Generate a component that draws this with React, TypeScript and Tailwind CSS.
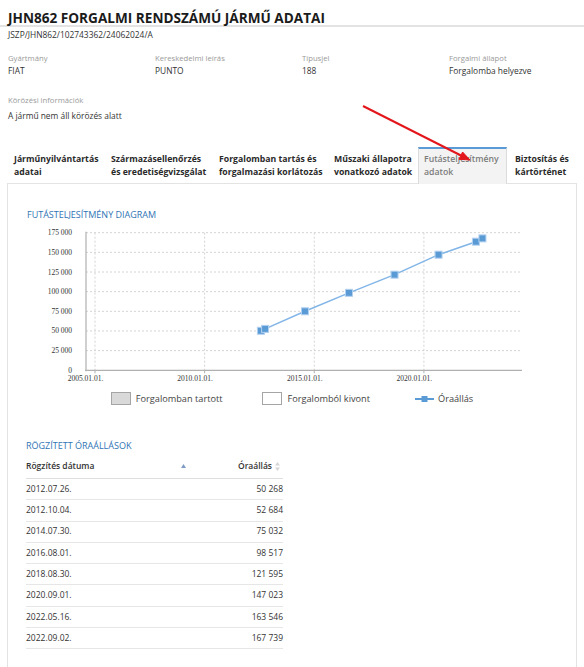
const INFO = [
  { label: "Gyártmány", value: "FIAT" },
  { label: "Kereskedelmi leírás", value: "PUNTO" },
  { label: "Típusjel", value: "188" },
  { label: "Forgalmi állapot", value: "Forgalomba helyezve" },
];

const TABS = [
  { lines: ["Járműnyilvántartás", "adatai"], w: "w-[97px] pl-[6px]" },
  { lines: ["Származásellenőrzés", "és eredetiségvizsgálat"], w: "w-[108px] pl-[6px]" },
  { lines: ["Forgalomban tartás és", "forgalmazási korlátozás"], w: "w-[115px] pl-[6px]" },
  { lines: ["Műszaki állapotra", "vonatkozó adatok"], w: "w-[90px] pl-[6px]" },
  { lines: ["Futásteljesítmény", "adatok"], w: "w-[89px] pl-[5px]", active: true },
  { lines: ["Biztosítás és", "kártörténet"], w: "w-[69px] pl-[8px]" },
];

const READINGS = [
  { date: "2012.07.26.", km: 50268 },
  { date: "2012.10.04.", km: 52684 },
  { date: "2014.07.30.", km: 75032 },
  { date: "2016.08.01.", km: 98517 },
  { date: "2018.08.30.", km: 121595 },
  { date: "2020.09.01.", km: 147023 },
  { date: "2022.05.16.", km: 163546 },
  { date: "2022.09.02.", km: 167739 },
];

const fmt = (n: number) => String(n).replace(/\B(?=(\d{3})+(?!\d))/g, " ");

// chart scale, page coordinates
const X0 = 95;
const PX_PER_YEAR = 21.93;
const Y0 = 370.3;
const PX_PER_STEP = 19.66;

const years = (d: string) => {
  const [y, m, day] = d.split(".").map(Number);
  return (Date.UTC(y, m - 1, day) - Date.UTC(2005, 0, 1)) / (365.25 * 864e5);
};
const sx = (d: string) => X0 + years(d) * PX_PER_YEAR;
const sy = (v: number) => Y0 - (v / 25000) * PX_PER_STEP;

const YTICKS = [0, 25000, 50000, 75000, 100000, 125000, 150000, 175000];
const XTICKS = ["2005.01.01.", "2010.01.01.", "2015.01.01.", "2020.01.01."];

function Chart() {
  const pts = READINGS.map((r) => [sx(r.date), sy(r.km)] as const);
  const top = sy(175000);
  return (
    <svg width="568" height="170" className="block">
      <g transform="translate(-8,-221)">
        {YTICKS.slice(1).map((v) => (
          <line key={v} x1={86} x2={522} y1={sy(v)} y2={sy(v)} stroke="#d4d4d4" strokeWidth="1" strokeDasharray="2 2" />
        ))}
        {XTICKS.map((d) => (
          <line key={d} x1={sx(d)} x2={sx(d)} y1={top} y2={Y0} stroke="#d4d4d4" strokeWidth="1" strokeDasharray="2 2" />
        ))}
        <line x1={86} x2={86} y1={top - 1} y2={Y0 + 1} stroke="#b0b0b0" strokeWidth="1.2" />
        <line x1={85} x2={522} y1={Y0} y2={Y0} stroke="#b0b0b0" strokeWidth="1.2" />
        {XTICKS.map((d) => (
          <line key={d} x1={sx(d)} x2={sx(d)} y1={Y0} y2={Y0 + 3} stroke="#b0b0b0" strokeWidth="1" />
        ))}
        {YTICKS.map((v) => (
          <text key={v} x={72} y={sy(v) + 2.5} textAnchor="end" fontSize="7.5" fill="#333" fontFamily="'Liberation Serif', serif">
            {v === 0 ? "0" : fmt(v)}
          </text>
        ))}
        {XTICKS.map((d) => (
          <text key={d} x={sx(d) - 9.5} y={381} textAnchor="middle" fontSize="7.5" fill="#333" fontFamily="'Liberation Serif', serif">
            {d}
          </text>
        ))}
        <polyline points={pts.map((p) => p.join(",")).join(" ")} fill="none" stroke="#82b5e8" strokeWidth="1.5" />
        {pts.map(([x, y], i) => (
          <rect key={i} x={x - 3.5} y={y - 3.5} width="7" height="7" fill="#5b9bd5" stroke="#b3d1f0" strokeWidth="1" />
        ))}
      </g>
    </svg>
  );
}

function SortUp() {
  return (
    <svg width="5" height="4" viewBox="0 0 5 4">
      <path d="M2.5 0L5 4H0z" fill="#7f9cc6" />
    </svg>
  );
}

function SortBoth() {
  return (
    <svg width="5" height="9" viewBox="0 0 5 9">
      <path d="M2.5 0L5 3.5H0z" fill="#d6d6d6" />
      <path d="M2.5 9L5 5.5H0z" fill="#d6d6d6" />
    </svg>
  );
}

export default function App() {
  return (
    <div className="relative w-[584px] h-[667px] overflow-hidden bg-white font-['Open_Sans',sans-serif] text-[#333]">
      <h1 className="pt-[10px] pl-[8px] text-[13.6px] leading-[15px] font-bold text-[#1b1b1b] border-b-2 border-[#e3e3e3]">
        JHN862 FORGALMI RENDSZÁMÚ JÁRMŰ ADATAI
      </h1>
      <p className="pl-[8px] mt-[2px] text-[8.4px] leading-[12px] text-[#333]">JSZP/JHN862/102743362/24062024/A</p>

      <div className="grid grid-cols-[147px_147px_147px_147px] pl-[8px] mt-[12px]">
        {INFO.map((f) => (
          <div key={f.label}>
            <div className="text-[7.7px] leading-[10px] text-[#9a9a9a]">{f.label}</div>
            <div className="mt-[2px] text-[8.4px] leading-[12px] text-[#333]">{f.value}</div>
          </div>
        ))}
      </div>

      <div className="pl-[8px] mt-[18px]">
        <div className="text-[7.7px] leading-[10px] text-[#9a9a9a]">Körözési információk</div>
        <div className="mt-[5px] text-[8.4px] leading-[12px] text-[#333]">A jármű nem áll körözés alatt</div>
      </div>

      <div className="flex ml-[8px] mt-[25px] h-[36px]">
        {TABS.map((t) => (
          <div
            key={t.lines[0]}
            className={`${t.w} shrink-0 border-t-2 pt-[4px] ${
              t.active
                ? "border-[#5b9bd5] border-x border-x-[#dcdcdc] bg-[#f3f3f3] h-[37px] relative z-10 text-[#7b7b7b] font-semibold"
                : "border-transparent font-bold text-[#2a2a2a]"
            }`}
          >
            {t.lines.map((l) => (
              <div key={l} className="text-[8.7px] leading-[13px] whitespace-nowrap">
                {l}
              </div>
            ))}
          </div>
        ))}
      </div>

      <div className="ml-[7px] w-[570px] h-[500px] border border-b-0 border-[#e3e3e3]">
        <h2 className="pl-[19px] mt-[25px] text-[9px] leading-[12px] text-[#2f74b5]">FUTÁSTELJESÍTMÉNY DIAGRAM</h2>
        <Chart />

        <div className="flex justify-center items-center h-[16px] text-[9.2px] text-[#444]">
          <div className="flex items-center gap-[5px]">
            <span className="w-[20px] h-[13px] bg-[#d9d9d9] border border-[#a5a5a5]" />
            <span>Forgalomban tartott</span>
          </div>
          <div className="flex items-center gap-[5px] ml-[40px]">
            <span className="w-[20px] h-[13px] bg-white border border-[#a5a5a5]" />
            <span>Forgalomból kivont</span>
          </div>
          <div className="flex items-center gap-[4px] ml-[45px]">
            <svg width="19" height="8" viewBox="0 0 19 8">
              <line x1="0" x2="19" y1="4" y2="4" stroke="#5b9bd5" strokeWidth="2" />
              <rect x="6.5" y="1" width="6" height="6" fill="#5b9bd5" />
            </svg>
            <span>Óraállás</span>
          </div>
        </div>

        <h2 className="pl-[18px] mt-[33px] text-[9px] leading-[12px] text-[#2f74b5]">RÖGZÍTETT ÓRAÁLLÁSOK</h2>

        <div className="ml-[18px] w-[257px] mt-[2px] text-[8.5px]">
          <div className="flex h-[25px] items-center border-b border-[#dedede] font-semibold text-[#333]">
            <div className="w-[164px] flex items-center justify-between pr-[4px]">
              <span>Rögzítés dátuma</span>
              <SortUp />
            </div>
            <div className="flex-1 flex items-center justify-end gap-[3px] pr-[3px]">
              <span>Óraállás</span>
              <SortBoth />
            </div>
          </div>
          {READINGS.map((r) => (
            <div key={r.date} className="flex h-[21.3px] items-center justify-between border-b border-[#e6e6e6]">
              <span>{r.date}</span>
              <span>{fmt(r.km)}</span>
            </div>
          ))}
        </div>
      </div>

      <svg className="absolute left-0 top-0 z-20 pointer-events-none" width="584" height="200">
        <line x1="363" y1="106" x2="461" y2="155.5" stroke="#e3161c" strokeWidth="2" />
        <path d="M470 160L459 159.3L462.6 152z" fill="#e3161c" stroke="#e3161c" strokeWidth="1" strokeLinejoin="round" />
      </svg>
    </div>
  );
}
